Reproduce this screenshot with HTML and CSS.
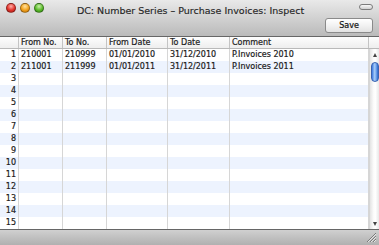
FILE: index.html
```html
<!DOCTYPE html>
<html>
<head>
<meta charset="utf-8">
<link rel="stylesheet" href="styles.css">
</head>
<body>
<div class="window">
  <div class="top">
    <div class="titlebar">
      <div class="lights">
        <span class="light red"></span>
        <span class="light orange"></span>
        <span class="light green"></span>
      </div>
      <div class="title">DC: Number Series – Purchase Invoices: Inspect</div>
      <span class="pill"></span>
    </div>
    <div class="toolbar">
      <button class="save">Save</button>
    </div>
  </div>
  <div class="table">
    <div class="head">
      <div class="hc"></div>
      <div class="hc">From No.</div>
      <div class="hc">To No.</div>
      <div class="hc">From Date</div>
      <div class="hc">To Date</div>
      <div class="hc">Comment</div>
      <div class="hc last"></div>
    </div>
    <div class="body">
      <div class="rows" id="rows">
        <div class="row"><div class="c num">1</div><div class="c">210001</div><div class="c">210999</div><div class="c">01/01/2010</div><div class="c">31/12/2010</div><div class="c">P.Invoices 2010</div></div>
        <div class="row"><div class="c num">2</div><div class="c">211001</div><div class="c">211999</div><div class="c">01/01/2011</div><div class="c">31/12/2011</div><div class="c">P.Invoices 2011</div></div>
        <div class="row"><div class="c num">3</div><div class="c"></div><div class="c"></div><div class="c"></div><div class="c"></div><div class="c"></div></div>
        <div class="row"><div class="c num">4</div><div class="c"></div><div class="c"></div><div class="c"></div><div class="c"></div><div class="c"></div></div>
        <div class="row"><div class="c num">5</div><div class="c"></div><div class="c"></div><div class="c"></div><div class="c"></div><div class="c"></div></div>
        <div class="row"><div class="c num">6</div><div class="c"></div><div class="c"></div><div class="c"></div><div class="c"></div><div class="c"></div></div>
        <div class="row"><div class="c num">7</div><div class="c"></div><div class="c"></div><div class="c"></div><div class="c"></div><div class="c"></div></div>
        <div class="row"><div class="c num">8</div><div class="c"></div><div class="c"></div><div class="c"></div><div class="c"></div><div class="c"></div></div>
        <div class="row"><div class="c num">9</div><div class="c"></div><div class="c"></div><div class="c"></div><div class="c"></div><div class="c"></div></div>
        <div class="row"><div class="c num">10</div><div class="c"></div><div class="c"></div><div class="c"></div><div class="c"></div><div class="c"></div></div>
        <div class="row"><div class="c num">11</div><div class="c"></div><div class="c"></div><div class="c"></div><div class="c"></div><div class="c"></div></div>
        <div class="row"><div class="c num">12</div><div class="c"></div><div class="c"></div><div class="c"></div><div class="c"></div><div class="c"></div></div>
        <div class="row"><div class="c num">13</div><div class="c"></div><div class="c"></div><div class="c"></div><div class="c"></div><div class="c"></div></div>
        <div class="row"><div class="c num">14</div><div class="c"></div><div class="c"></div><div class="c"></div><div class="c"></div><div class="c"></div></div>
        <div class="row"><div class="c num">15</div><div class="c"></div><div class="c"></div><div class="c"></div><div class="c"></div><div class="c"></div></div>
      </div>
      <div class="scroll">
        <div class="arrow up"></div>
        <div class="thumb"></div>
        <div class="track"></div>
        <div class="arrow down"></div>
      </div>
    </div>
  </div>
  <div class="bottom">
    <svg class="grip" width="11" height="11" viewBox="0 0 11 11">
      <path d="M1 10 L10 1 M4 10 L10 4 M7 10 L10 7" stroke="#7a7a7a" stroke-width="1"/>
      <path d="M2 10 L10 2 M5 10 L10 5 M8 10 L10 8" stroke="#e6e6e6" stroke-width="1"/>
    </svg>
  </div>
</div>
</body>
</html>
```

FILE: styles.css
```css
* { box-sizing: border-box; }
html, body { margin: 0; padding: 0; }
body {
  width: 379px;
  height: 245px;
  overflow: hidden;
  font-family: "DejaVu Sans", "Liberation Sans", sans-serif;
  font-size: 8px;
  color: #1a1a1a;
}
.window {
  width: 379px;
  height: 245px;
  display: flex;
  flex-direction: column;
  background: #fff;
}
.top {
  height: 37px;
  flex: none;
  background: linear-gradient(#e9e9e9, #d6d6d6 40%, #bababa);
  border-bottom: 1px solid #666;
  display: flex;
  flex-direction: column;
}
.titlebar {
  height: 17px;
  position: relative;
  display: flex;
  align-items: center;
  justify-content: center;
}
.lights {
  position: absolute;
  left: 6px;
  top: 3px;
  display: flex;
  gap: 4px;
}
.light {
  width: 10px;
  height: 10px;
  border-radius: 50%;
  border: 1px solid rgba(0,0,0,0.35);
}
.red { background: radial-gradient(circle at 50% 30%, #ffb0a8, #e3342c 55%, #9e1a12); }
.orange { background: radial-gradient(circle at 50% 30%, #ffe2a0, #f3a31e 55%, #b56a08); }
.green { background: radial-gradient(circle at 50% 30%, #c8f0a8, #5cbb2c 55%, #2c7d10); }
.title {
  font-size: 9.5px;
  color: #262626;
  padding-top: 3px;
  margin-left: 2px;
  -webkit-text-stroke: 0.15px #262626;
}
.pill {
  position: absolute;
  right: 6px;
  top: 4px;
  width: 14px;
  height: 6px;
  border-radius: 3px;
  border: 1px solid #7b7b7b;
  background: linear-gradient(#f8f8f8, #cfcfcf);
}
.toolbar {
  flex: 1;
  display: flex;
  justify-content: flex-end;
  align-items: flex-start;
  padding: 1px 6px 0 0;
}
.save {
  width: 48px;
  height: 15px;
  border: 1px solid #8a8a8a;
  border-radius: 3px;
  background: linear-gradient(#ffffff, #f2f2f2 50%, #e2e2e2);
  font-family: "DejaVu Sans", "Liberation Sans", sans-serif;
  font-size: 8px;
  color: #111;
  padding: 0;
  -webkit-text-stroke: 0.2px #111;
}
.table {
  flex: 1;
  display: flex;
  flex-direction: column;
  min-height: 0;
}
.head {
  height: 12px;
  flex: none;
  display: grid;
  grid-template-columns: 19px 44px 44px 61px 62px 139px 10px;
  background: linear-gradient(#fdfdfd, #eeeeee);
  border-bottom: 1px solid #b9b9b9;
}
.hc {
  border-right: 1px solid #c4c4c4;
  padding-left: 2px;
  line-height: 11px;
  color: #222;
  white-space: nowrap;
  overflow: hidden;
  -webkit-text-stroke: 0.2px #222;
}
.hc.last { border-right: none; }
.body {
  flex: 1;
  display: flex;
  min-height: 0;
}
.rows {
  width: 369px;
  display: flex;
  flex-direction: column;
}
.row {
  height: 12px;
  flex: none;
  display: grid;
  grid-template-columns: 19px 44px 44px 61px 62px 139px;
}
.row:nth-child(even) { background: #edf3fe; }
.c {
  border-right: 1px solid #d6d6d6;
  padding-left: 2px;
  line-height: 12px;
  white-space: nowrap;
  overflow: hidden;
  -webkit-text-stroke: 0.2px #1a1a1a;
}
.c.num {
  text-align: right;
  padding: 0 2px 0 0;
}
.scroll {
  width: 10px;
  display: flex;
  flex-direction: column;
  align-items: center;
  background: linear-gradient(90deg, #e4e4e4, #fbfbfb 40%, #ffffff 60%, #e8e8e8);
  border-left: 1px solid #d6d6d6;
}
.arrow {
  width: 0;
  height: 0;
  border-left: 2.5px solid transparent;
  border-right: 2.5px solid transparent;
}
.arrow.up {
  margin-top: 4px;
  border-bottom: 4px solid #444;
}
.arrow.down {
  margin-bottom: 3px;
  border-top: 4px solid #444;
}
.thumb {
  margin-top: 5px;
  width: 8px;
  height: 20px;
  border-radius: 4px;
  border: 1px solid #3a63b0;
  background: linear-gradient(90deg, #3b78e0, #a9cdf8 45%, #6ea4ec 70%, #2f66cc);
}
.track { flex: 1; }
.bottom {
  height: 16px;
  flex: none;
  border-top: 1px solid #666;
  background: linear-gradient(#d0d0d0, #b0b0b0);
  display: flex;
  justify-content: flex-end;
  align-items: flex-end;
  padding: 0 2px 2px 0;
}
.grip { display: block; }
```
